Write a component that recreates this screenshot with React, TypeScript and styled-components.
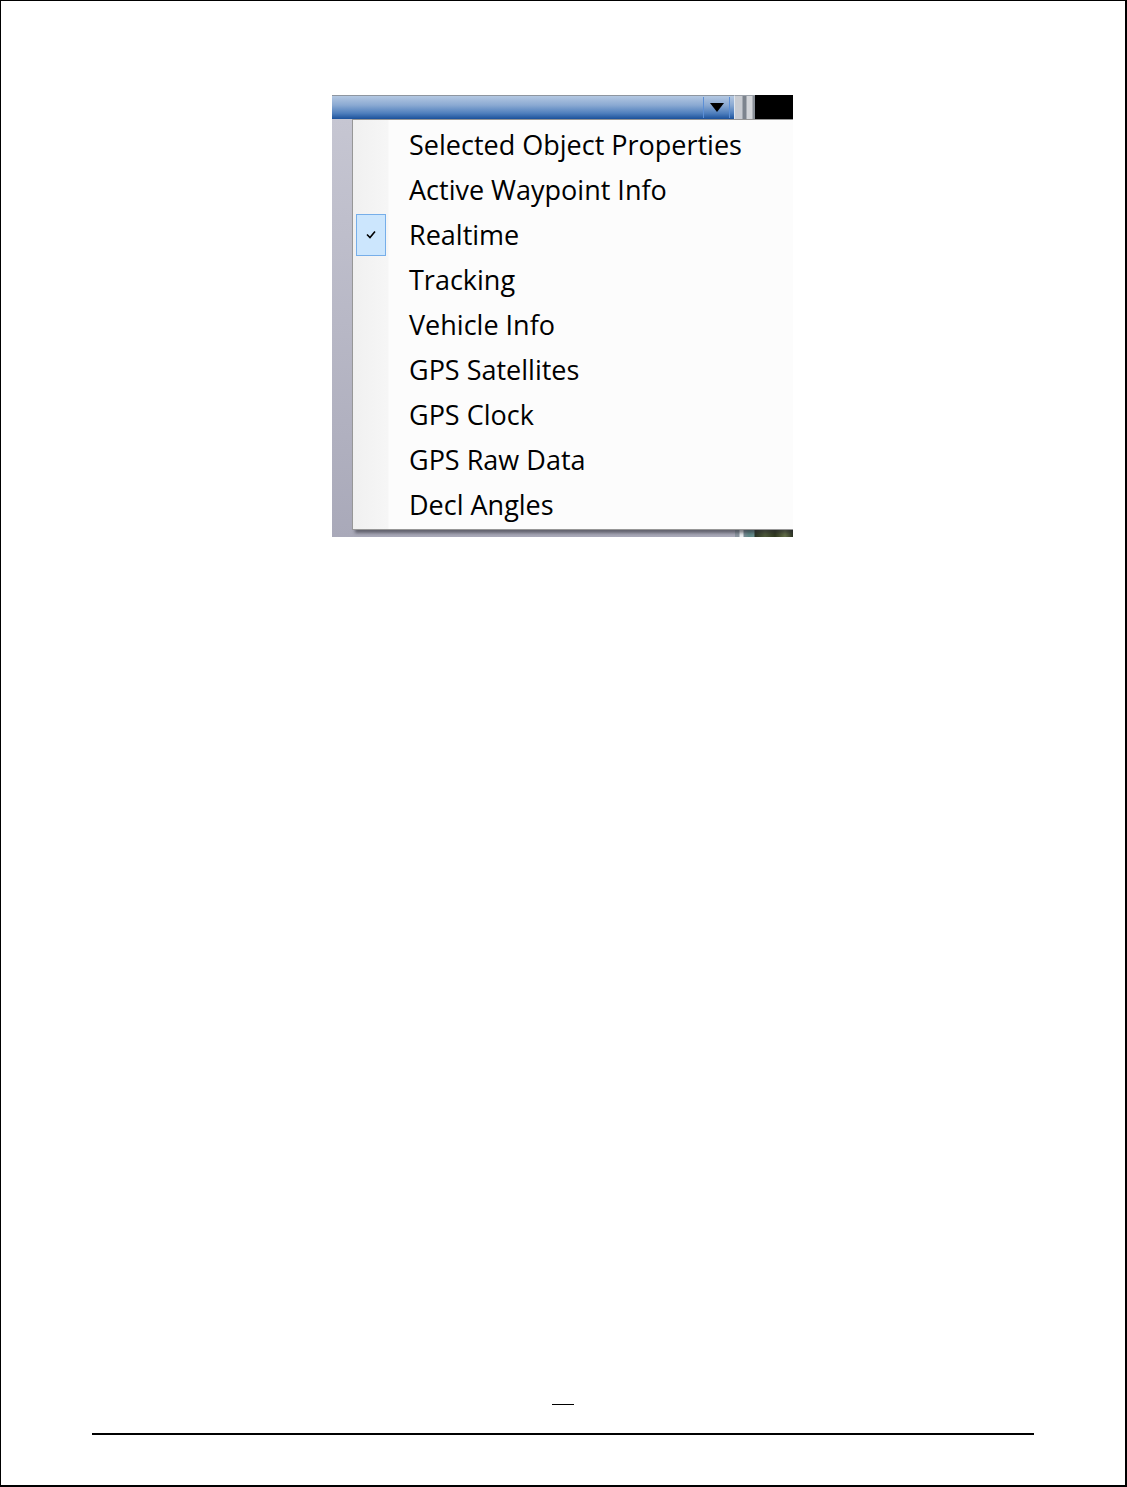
import React from "react";
import styled, { createGlobalStyle } from "styled-components";

const Global = createGlobalStyle`
  html, body { margin: 0; padding: 0; background: #ffffff; }
  #root { width: 1127px; }
`;

const Page = styled.div`
  width: 1127px;
  height: 1487px;
  box-sizing: border-box;
  border-style: solid;
  border-color: #000;
  border-width: 1px 2px 2px 1px;
  display: flex;
  flex-direction: column;
  align-items: center;
  background: #fff;
`;

const Figure = styled.div`
  align-self: flex-start;
  margin: 94px 0 0 331px;
  width: 461px;
  height: 442px;
  display: flex;
  flex-direction: column;
  overflow: hidden;
`;

const TitleBar = styled.div`
  height: 24px;
  display: flex;
  flex-shrink: 0;
`;

const BlueBar = styled.div`
  width: 403px;
  box-sizing: border-box;
  border-top: 1px solid #8e96a0;
  border-right: 1px solid #dfe6ee;
  background: linear-gradient(#b4c8e2 0%, #8aa9d2 40%, #4f7fbd 75%, #1b519b 100%);
  display: flex;
  justify-content: flex-end;
  align-items: stretch;
  padding: 1px 4px 1px 0;
`;

const DropButton = styled.div`
  width: 27px;
  box-sizing: border-box;
  border-left: 1px solid #5c8fd6;
  border-right: 1px solid #5c8fd6;
  display: flex;
  align-items: center;
  justify-content: center;
`;

const Splitter = styled.div`
  width: 20px;
  box-sizing: border-box;
  border-top: 1px solid #9aa0a8;
  background: linear-gradient(
    90deg,
    #c9ccd2 0px,
    #c9ccd2 7px,
    #7d848e 8px,
    #7d848e 11px,
    #d4d6da 12px,
    #d4d6da 17px,
    #8a9098 18px,
    #8a9098 20px
  );
`;

const BlackBlock = styled.div`
  flex: 1;
  background: #000;
`;

const Body = styled.div`
  flex: 1;
  position: relative;
  background: linear-gradient(#c6c6d2, #a9a9b9);
  padding: 0 0 7px 20px;
  display: flex;
`;

const Corner = styled.div`
  position: absolute;
  right: 0;
  bottom: 0;
  width: 58px;
  height: 7px;
  background: linear-gradient(
    90deg,
    #8b95a0 0px,
    #8b95a0 4px,
    #e8ecef 5px,
    #e8ecef 8px,
    #7a8c96 9px,
    #5f8a88 14px,
    #6a9090 19px,
    #2a3324 20px,
    #4e5a3a 30px,
    #30381f 40px,
    #657048 50px,
    #2c3322 58px
  );
`;

const Menu = styled.div`
  position: relative;
  z-index: 1;
  flex: 1;
  box-sizing: border-box;
  border: 1px solid #979797;
  border-right: none;
  background: linear-gradient(90deg, #f0f0f0 0px, #f6f6f6 35px, #fcfcfc 36px, #fcfcfc 100%);
  box-shadow: 3px 3px 3px rgba(40, 40, 50, 0.55);
  padding: 2px 0 2px 0;
  display: flex;
  flex-direction: column;
`;

const Item = styled.div`
  height: 45px;
  display: flex;
  align-items: center;
`;

const Gutter = styled.div`
  width: 36px;
  height: 100%;
  display: flex;
  align-items: center;
  justify-content: center;
  flex-shrink: 0;
`;

const CheckBox = styled.div`
  width: 30px;
  height: 42px;
  box-sizing: border-box;
  border: 1px solid #76aee9;
  background: #cce6fd;
  display: flex;
  align-items: center;
  justify-content: center;
`;

const Label = styled.span`
  margin-left: 20px;
  font-family: "Open Sans", "Noto Sans", sans-serif;
  font-size: 27px;
  color: #000;
  white-space: nowrap;
  line-height: 1;
`;

const Spacer = styled.div`
  flex: 1;
`;

const FootMark = styled.div`
  width: 22px;
  height: 1px;
  background: #000;
  margin-bottom: 28px;
`;

const Rule = styled.div`
  width: 942px;
  height: 2px;
  background: #000;
  margin-bottom: 50px;
`;

const items: { label: string; checked?: boolean }[] = [
  { label: "Selected Object Properties" },
  { label: "Active Waypoint Info" },
  { label: "Realtime", checked: true },
  { label: "Tracking" },
  { label: "Vehicle Info" },
  { label: "GPS Satellites" },
  { label: "GPS Clock" },
  { label: "GPS Raw Data" },
  { label: "Decl Angles" },
];

export default function App() {
  return (
    <>
      <Global />
      <Page>
        <Figure>
          <TitleBar>
            <BlueBar>
              <DropButton>
                <svg width="14" height="9" viewBox="0 0 14 9">
                  <path d="M0 0 L14 0 L7 9 Z" fill="#000" />
                </svg>
              </DropButton>
            </BlueBar>
            <Splitter />
            <BlackBlock />
          </TitleBar>
          <Body>
            <Corner />
            <Menu>
              {items.map((it) => (
                <Item key={it.label}>
                  <Gutter>
                    {it.checked && (
                      <CheckBox>
                        <svg width="10" height="9" viewBox="0 0 10 9">
                          <path
                            d="M1 4.5 L4 7.5 L9 1.5"
                            fill="none"
                            stroke="#000"
                            strokeWidth="1.6"
                          />
                        </svg>
                      </CheckBox>
                    )}
                  </Gutter>
                  <Label>{it.label}</Label>
                </Item>
              ))}
            </Menu>
          </Body>
        </Figure>
        <Spacer />
        <FootMark />
        <Rule />
      </Page>
    </>
  );
}
